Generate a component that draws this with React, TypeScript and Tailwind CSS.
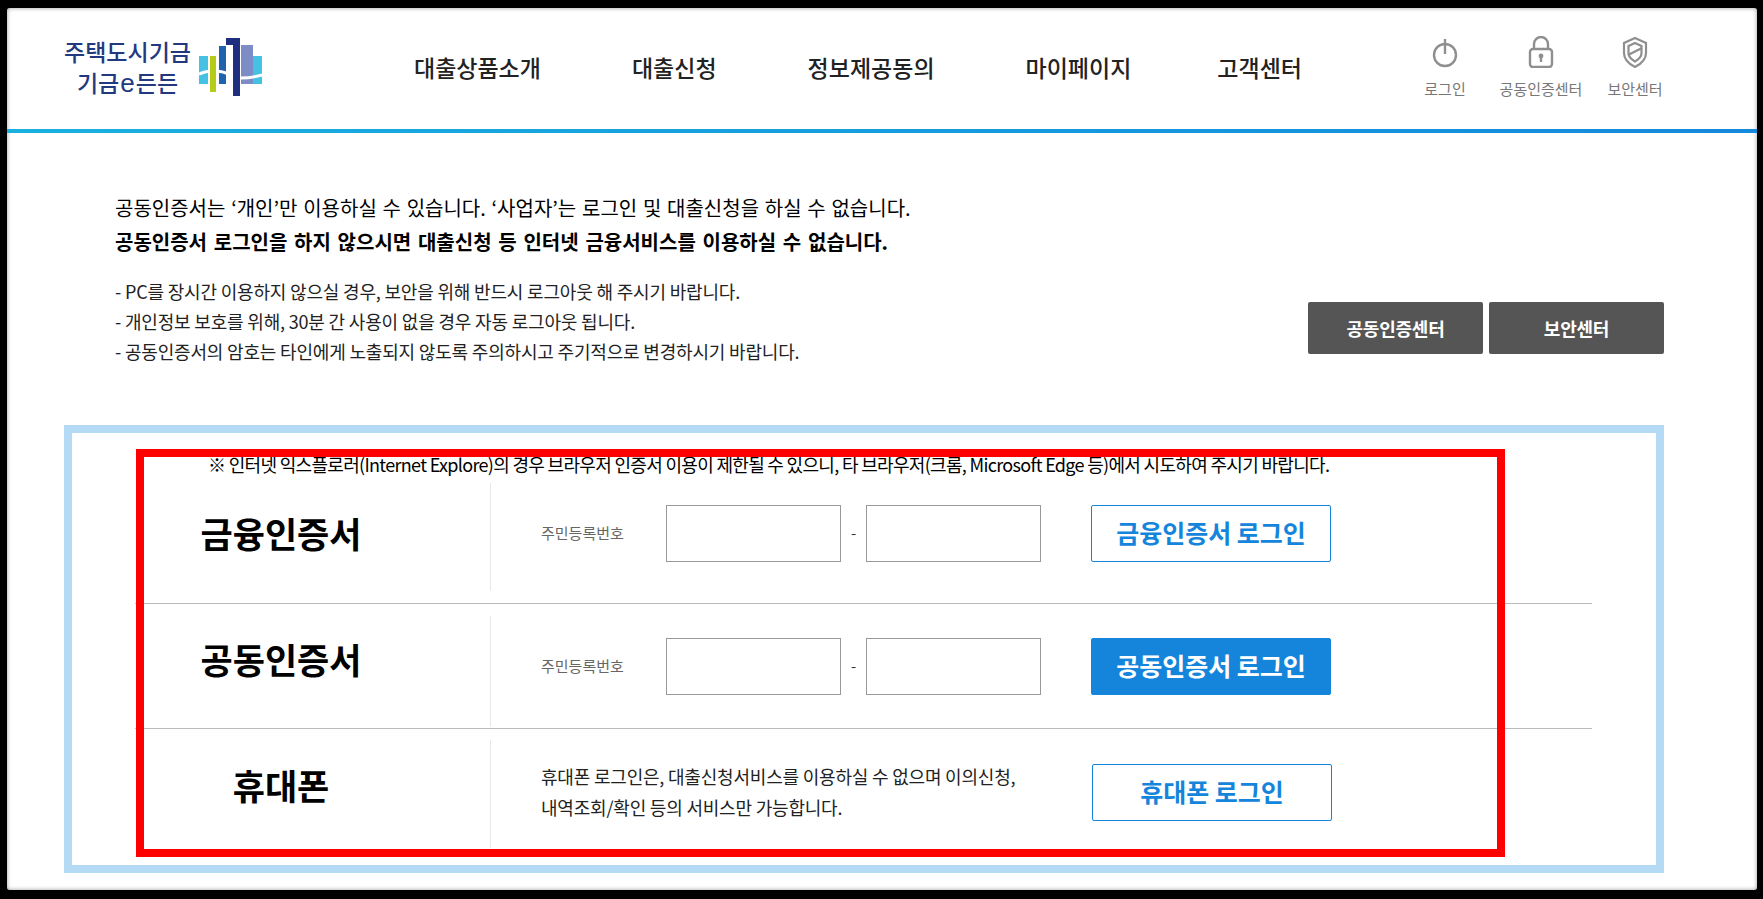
const font = "font-['Noto_Sans_CJK_KR','Noto_Sans',sans-serif]"

function Logo() {
  return (
    <div className="flex items-center gap-[8px]">
      <div className="flex flex-col items-center text-[#22397f] font-medium leading-[31px] text-[23px]">
        <span>주택도시기금</span>
        <span className="flex items-baseline h-[31px]">
          기금<span className="font-['Liberation_Sans',sans-serif] text-[26px] leading-[26px] mx-[1px]">e</span>든든
        </span>
      </div>
      <svg width="63" height="58" viewBox="0 0 63 58">
        <rect x="0" y="18" width="9" height="28" fill="#45c1e4" />
        <rect x="20" y="8" width="7" height="38" fill="#1f63ae" />
        <rect x="42" y="7" width="12" height="39" fill="#7d8cc6" />
        <rect x="54" y="18" width="9" height="28" fill="#45c1e4" />
        <path d="M0 36 C5 34 9 33 13 33 S22 33 27 35 S36 40 42 40 S56 39 63 37" stroke="#fff" strokeWidth="3" fill="none" />
        <rect x="11" y="18" width="6" height="36" fill="#b5cc18" />
        <path d="M27 0H41V58H34V7H27z" fill="#1d2f7e" />
      </svg>
    </div>
  )
}

function PowerIcon() {
  return (
    <svg width="26" height="32" viewBox="0 0 26 32" fill="none" stroke="#8f8f8f" strokeWidth="2.4">
      <circle cx="13" cy="19" r="11" />
      <path d="M13 3v15" />
    </svg>
  )
}

function LockIcon() {
  return (
    <svg width="26" height="32" viewBox="0 0 26 32" fill="none" stroke="#8f8f8f" strokeWidth="2.4">
      <path d="M6 13V8a7 7 0 0 1 14 0v5" />
      <rect x="2" y="13" width="22" height="18" rx="3" />
      <circle cx="13" cy="20" r="2.4" fill="#8f8f8f" stroke="none" />
      <path d="M13 21v5" />
    </svg>
  )
}

function ShieldIcon() {
  return (
    <svg width="26" height="32" viewBox="0 0 26 32" fill="none" stroke="#8f8f8f" strokeWidth="2.2">
      <path d="M13 2l11 5v10c0 7-5 11-11 14C7 28 2 24 2 17V7z" />
      <path d="M13 7l6.5 3v7c0 4-3 6.500-6.500 8.500-3.500-2-6.500-4.500-6.500-8.500v-7z" />
      <path d="M6 19l14-7" />
    </svg>
  )
}

function RrnFields() {
  return (
    <>
      <span className="w-[125px] text-[15px] text-[#666]">주민등록번호</span>
      <div className="w-[175px] h-[57px] border border-[#999]" />
      <span className="w-[25px] text-center text-[15px] text-[#333]">-</span>
      <div className="w-[175px] h-[57px] border border-[#999]" />
    </>
  )
}

function LoginButton({ label, solid }: { label: string; solid?: boolean }) {
  return (
    <button
      className={
        'ml-[50px] w-[240px] h-[57px] rounded-[2px] border border-[#1585db] text-[25px] font-bold ' +
        (solid ? 'bg-[#1585db] text-white' : 'bg-white text-[#1585db]')
      }
    >
      {label}
    </button>
  )
}

interface RowProps {
  title: string
  rowClass: string
  titleClass: string
  dividerClass: string
  children: React.ReactNode
}

function Row({ title, rowClass, titleClass, dividerClass, children }: RowProps) {
  return (
    <div className={'flex items-center ' + rowClass}>
      <div className={'w-[292px] text-center text-[35px] font-bold text-black ' + titleClass}>{title}</div>
      <div className="w-[63px]" />
      <div className={'w-px bg-[#e8e8e8] ' + dividerClass} />
      <div className="flex items-center pl-[50px]">{children}</div>
    </div>
  )
}

export default function App() {
  return (
    <div className={`relative h-[899px] bg-black pt-[8px] pl-[7px] pr-[6px] pb-[9px] overflow-hidden ${font}`}>
      <div className="h-full bg-white rounded-[3px] shadow-[inset_0_0_4px_#999]">
        <header className="flex items-center h-[121px] pl-[57px] pb-[3px]">
          <Logo />
          <nav className="flex items-center gap-[91px] ml-[152px] text-[23px] font-medium text-[#222]">
            <span>대출상품소개</span>
            <span>대출신청</span>
            <span>정보제공동의</span>
            <span>마이페이지</span>
            <span className="-ml-[5px]">고객센터</span>
          </nav>
          <div className="flex ml-auto mr-[92px] text-[15px] leading-[20px] text-[#777]">
            <div className="flex flex-col items-center w-[50px] gap-[11px]"><PowerIcon />로그인</div>
            <div className="flex flex-col items-center w-[84px] ml-[29px] gap-[11px]"><LockIcon />공동인증센터</div>
            <div className="flex flex-col items-center w-[60px] ml-[22px] gap-[11px]"><ShieldIcon />보안센터</div>
          </div>
        </header>
        <div className="h-[4px] bg-gradient-to-r from-[#1ab0e0] to-[#1589dc]" />

        <section className="flex items-end pl-[108px] pr-[93px] pt-[58px]">
          <div className="flex-1 text-black">
            <p className="text-[20px] leading-[34px] [word-spacing:1.25px]">
              공동인증서는 ‘개인’만 이용하실 수 있습니다. ‘사업자’는 로그인 및 대출신청을 하실 수 없습니다.
            </p>
            <p className="text-[20px] leading-[34px] font-bold [word-spacing:2.2px]">
              공동인증서 로그인을 하지 않으시면 대출신청 등 인터넷 금융서비스를 이용하실 수 없습니다.
            </p>
            <ul className="mt-[17px] text-[18px] leading-[30px] tracking-[-0.18px] text-[#222]">
              <li>- PC를 장시간 이용하지 않으실 경우, 보안을 위해 반드시 로그아웃 해 주시기 바랍니다.</li>
              <li>- 개인정보 보호를 위해, 30분 간 사용이 없을 경우 자동 로그아웃 됩니다.</li>
              <li>- 공동인증서의 암호는 타인에게 노출되지 않도록 주의하시고 주기적으로 변경하시기 바랍니다.</li>
            </ul>
          </div>
          <div className="flex gap-[6px] mb-[12px]">
            <button className="w-[175px] h-[52px] rounded-[2px] bg-[#555] text-white text-[18px] font-bold tracking-[-0.2px]">공동인증센터</button>
            <button className="w-[175px] h-[52px] rounded-[2px] bg-[#555] text-white text-[18px] font-bold tracking-[-0.2px]">보안센터</button>
          </div>
        </section>

        <section className="mt-[59px] ml-[57px] w-[1600px] h-[448px] border-[8px] border-[#b5daf5]">
          <p className="pt-[19px] pb-[1px] pl-[136px] text-[18px] leading-[24px] tracking-[-0.68px] text-black whitespace-nowrap">
            ※ 인터넷 익스플로러(Internet Explore)의 경우 브라우저 인증서 이용이 제한될 수 있으니, 타 브라우저(크롬, Microsoft Edge 등)에서 시도하여 주시기 바랍니다.
          </p>
          <div className="ml-[63px] w-[1457px]">
            <Row
              title="금융인증서"
              rowClass="h-[127px] pb-[14px] border-b border-[#bbb]"
              titleClass="mt-[1px]"
              dividerClass="h-[108px] mt-[7px]"
            >
              <RrnFields />
              <LoginButton label="금융인증서 로그인" />
            </Row>
            <Row
              title="공동인증서"
              rowClass="h-[125px] border-b border-[#bbb]"
              titleClass="-mt-[14px]"
              dividerClass="h-[111px] mt-[11px]"
            >
              <RrnFields />
              <LoginButton label="공동인증서 로그인" solid />
            </Row>
            <Row title="휴대폰" rowClass="h-[126px]" titleClass="-mt-[14px]" dividerClass="h-[108px] mt-[4px]">
              <p className="w-[501px] text-[18px] leading-[31px] tracking-[-0.2px] text-[#222] whitespace-nowrap">
                휴대폰 로그인은, 대출신청서비스를 이용하실 수 없으며 이의신청,
                <br />
                내역조회/확인 등의 서비스만 가능합니다.
              </p>
              <LoginButton label="휴대폰 로그인" />
            </Row>
          </div>
        </section>
      </div>

      {/* red highlight drawn over the screenshot */}
      <div className="absolute left-[136px] top-[449px] w-[1369px] h-[408px] border-[8px] border-[#ff0000] pointer-events-none" />
    </div>
  )
}
